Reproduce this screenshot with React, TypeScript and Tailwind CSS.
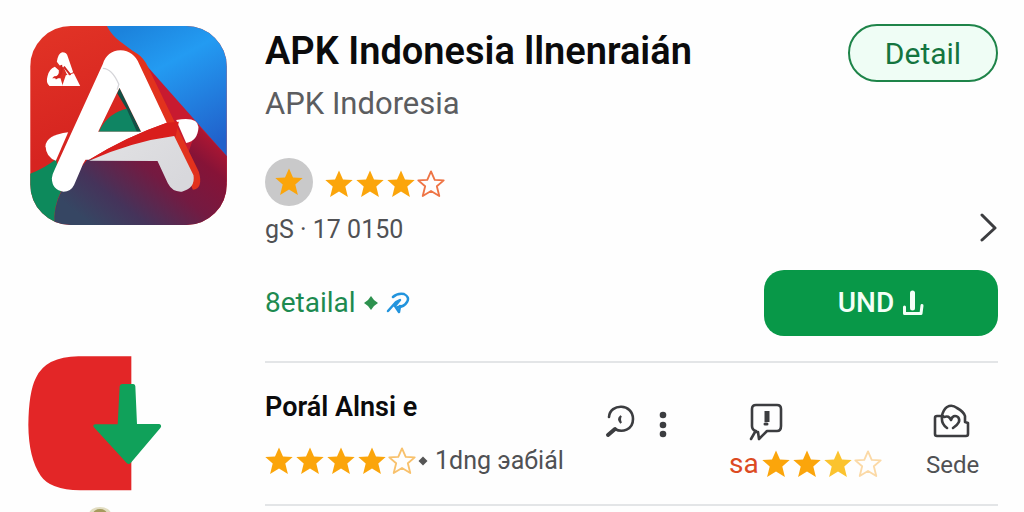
import type { ReactNode } from "react";

const STAR = "M14 0.500l4 9 9.700.6-7.400 6.400 2.600 10.500-8.900-5.500-8.900 5.500 2.600-10.500L.3 10.100l9.700-.6z";

type StarProps = { fill?: string; stroke?: string; small?: boolean };

function Star({ fill = "#fba50b", stroke = "none", small = false }: StarProps) {
  return (
    <svg viewBox="0 0 28 28" className={small ? "h-[26px] w-[26px] shrink-0 overflow-visible" : "h-7 w-7 shrink-0"} aria-hidden="true">
      <path d={STAR} fill={fill} stroke={stroke} strokeWidth="2" strokeLinejoin="round" />
    </svg>
  );
}

function AppLogo() {
  return (
    <svg viewBox="32 33 590 597" className="h-[199px] w-[197px]" role="img" aria-label="APK Indonesia">
      <defs>
        <clipPath id="tile">
          <rect x="32" y="33" width="590" height="597" rx="122" />
        </clipPath>
        <linearGradient id="sky" x1="0.2" y1="0" x2="0.7" y2="1">
          <stop offset="0" stopColor="#1c83dc" />
          <stop offset="0.35" stopColor="#239bf2" />
          <stop offset="1" stopColor="#2161cb" />
        </linearGradient>
        <linearGradient id="red" x1="0" y1="0" x2="0.4" y2="1">
          <stop offset="0" stopColor="#e23426" />
          <stop offset="0.6" stopColor="#d62420" />
          <stop offset="1" stopColor="#d91f20" />
        </linearGradient>
        <linearGradient id="dusk" x1="0" y1="0.7" x2="0.95" y2="0">
          <stop offset="0" stopColor="#364663" />
          <stop offset="0.22" stopColor="#45335a" />
          <stop offset="0.5" stopColor="#741a41" />
          <stop offset="0.75" stopColor="#861337" />
          <stop offset="1" stopColor="#c21830" />
        </linearGradient>
        <linearGradient id="leg" x1="0" y1="0" x2="1" y2="0.6">
          <stop offset="0" stopColor="#e2e2e4" />
          <stop offset="1" stopColor="#d8d8dc" />
        </linearGradient>
      </defs>
      <g clipPath="url(#tile)">
        <rect x="32" y="33" width="590" height="597" fill="url(#red)" />
        <path d="M262 33H622V430L510 310L400 180L345 112L300 78Q278 62 262 33z" fill="url(#sky)" />
        <path d="M375 145L622 424V500H500z" fill="#c81a30" />
        <path d="M105 630Q100 580 125 530L205 432H500L535 330L622 424V630z" fill="url(#dusk)" />
        <path d="M32 476Q75 460 110 432L125 528Q100 578 105 630H32z" fill="#0d8a5c" />
        <path d="M238 350Q265 292 328 280L364 350z" fill="#0f8563" />
        <path d="M300 218L364 350H352L322 283L293 235z" fill="#144f45" />
        <path d="M310 102Q362 105 385 155L538 470Q552 520 520 524L460 370L350 150z" fill="#e2321d" />
        <path d="M146 352Q80 360 78 394Q80 428 109 437z" fill="#fff" />
        <path d="M470 315Q535 304 537 336Q535 378 500 384z" fill="#fff" />
        <path d="M250 147Q262 108 303 106Q343 108 359 147L442 323Q320 365 209 434H198Q190 445 184 463L164 509Q154 530 132 530Q98 526 97 490Q99 476 106 463zM300 218L236 350H365z" fill="#fff" fillRule="evenodd" />
        <path d="M209 434Q320 365 442 323L478 320L468 366Q340 378 209 436z" fill="#d91e1c" />
        <path d="M209 437Q340 379 464 363L522 481Q528 520 487 530Q459 532 445 505L414 438z" fill="url(#leg)" />
        <path d="M250 160Q278 161 298 208L293 224" fill="none" stroke="#d5d5d9" strokeWidth="4" />
        <path d="M128 112Q142 112 145 125L161 172L143 180L133 158L120 151L112 140Q116 115 128 112z" fill="#fff" />
        <path d="M106 155L118 166Q120 184 104 184L98 190H123L130 213H90Q78 203 84 184Q88 162 106 155z" fill="#fff" />
        <path d="M139 181L163 175L182 213H128z" fill="#fff" />
        <path d="M125 150Q132 180 108 191M133 155L153 180" fill="none" stroke="#cf2420" strokeWidth="6" />
      </g>
    </svg>
  );
}

function PortalLogo() {
  return (
    <svg viewBox="84 33 402 405" className="h-[135px] w-[134px]" role="img" aria-label="Porál Alnsie">
      <path d="M394 34V436H240Q150 434 122 392Q86 340 85 240Q86 140 108 98Q138 35 235 34z" fill="#e32627" />
      <path d="M366 117H400Q406 118 406 124L411 237H478Q487 240 481 249L392 354Q386 360 380 354L281 246Q277 239 286 238H353L359 124Q360 118 366 117z" fill="#10a15a" />
    </svg>
  );
}

function IconButton({ label, children }: { label: string; children: ReactNode }) {
  return (
    <button type="button" aria-label={label} className="block text-[#3c3d40]">
      {children}
    </button>
  );
}

export default function App() {
  return (
    <main className="h-screen overflow-hidden bg-[#fefefe] pl-7 pr-[26px] pt-6 font-['Roboto',sans-serif] text-[#505154]">
      <article className="flex min-h-[332px]">
        <div className="w-[237px] shrink-0 pl-0.5 pt-0.5">
          <AppLogo />
        </div>
        <div className="min-w-0 flex-1">
          <header className="flex items-start justify-between">
            <div>
              <h1 className="whitespace-nowrap pt-1 text-[38px] leading-[46px] font-semibold text-[#0b0b0c]">APK Indonesia llnenraián</h1>
              <p className="pt-3 text-[31px] leading-9 text-[#5c5d60]">APK Indoresia</p>
            </div>
            <button type="button" className="h-[58px] w-[150px] rounded-full border-2 border-[#1e8449] bg-[#effdf5] text-[30px] text-[#14753f]">
              Detail
            </button>
          </header>

          <div className="mt-9 flex items-end justify-between">
            <div>
              <div className="flex items-center">
                <span className="mr-3 grid h-12 w-12 place-items-center rounded-full bg-[#c9c9ca]">
                  <Star />
                </span>
                <div className="flex items-center gap-[3px] pt-1" role="img" aria-label="3 / 4">
                  <Star />
                  <Star />
                  <Star />
                  <Star fill="none" stroke="#ee7445" small />
                </div>
              </div>
              <p className="pt-2 text-[25px] leading-8">gS · 17 0150</p>
            </div>
            <IconButton label="Next">
              <svg viewBox="0 0 18 34" className="h-[34px] w-[18px]" fill="none" stroke="currentColor" strokeWidth="3" strokeLinecap="round" strokeLinejoin="round">
                <path d="M2 3l13 13L2 28" />
              </svg>
            </IconButton>
          </div>

          <div className="mt-6 flex items-center justify-between">
            <a href="#detail" className="flex items-center text-[28px] leading-9 text-[#1d8a50]">
              8etailal
              <svg viewBox="0 0 14 14" className="ml-2 h-3.5 w-3.5" fill="#2d914e">
                <path d="M7 0l3 4L14 7l-4 3L7 14l-3-4L0 7l4-3z" />
              </svg>
              <svg viewBox="0 0 24 22" className="ml-2 h-[22px] w-6" fill="none" stroke="#2294dd" strokeWidth="2.500" strokeLinecap="round" strokeLinejoin="round">
                <path d="M7 5Q11 1 18 2Q24 5 21 10Q18 15 12 15" />
                <path d="M2 19L10 10L14 8L9 14L13 20L14 14" />
              </svg>
            </a>
            <button type="button" className="flex h-[66px] w-[234px] items-center justify-center gap-2 rounded-[20px] bg-[#089848] text-[28px] font-medium text-[#f3fff7]">
              UND
              <svg viewBox="0 0 22 26" className="h-[26px] w-[22px]" fill="none" stroke="currentColor" strokeWidth="3" strokeLinecap="round" strokeLinejoin="round">
                <path d="M10.500 3v15" strokeWidth="5" />
                <path d="M2.500 17v6.500h16.500l1-8" />
              </svg>
            </button>
          </div>
        </div>
      </article>

      <article className="flex">
        <div className="w-[237px] shrink-0">
          <PortalLogo />
        </div>
        <div className="mt-[5px] flex h-[145px] min-w-0 flex-1 items-start border-y-2 border-[#e3e5e7] pt-7">
          <div className="w-[336px] shrink-0">
            <h2 className="text-[27px] leading-8 font-semibold text-[#0b0b0c]">Porál Alnsi e</h2>
            <div className="flex items-center gap-[3px] pt-[22px]">
              <Star />
              <Star />
              <Star />
              <Star />
              <Star fill="none" stroke="#f8c16c" small />
              <svg viewBox="0 0 10 10" className="h-2.5 w-2.5" fill="#555">
                <path d="M5 0.500l4.500 4.500-4.500 4.500-4.500-4.500z" />
              </svg>
              <span className="whitespace-nowrap pl-1 text-[25px] leading-8">1dng эaбiál</span>
            </div>
          </div>
          <div className="flex gap-6 pl-1 pt-3.5">
            <IconButton label="Search">
              <svg viewBox="0 0 30 34" className="h-[34px] w-[30px]" fill="none" stroke="currentColor" strokeWidth="2.600" strokeLinecap="round">
                <path d="M4 12C5 -2 28 -2 28 14C28 25 17 28 10 24" />
                <path d="M3 30L10 24" strokeWidth="4" />
                <path d="M16 11Q12 14 16 18Q14 14 16 11z" strokeWidth="2" />
              </svg>
            </IconButton>
            <IconButton label="More">
              <svg viewBox="0 0 8 34" className="h-[34px] w-2" fill="currentColor">
                <circle cx="4" cy="10" r="3.300" />
                <circle cx="4" cy="20" r="3.300" />
                <circle cx="4" cy="29" r="3.300" />
              </svg>
            </IconButton>
          </div>
          <div className="ml-auto pt-3">
            <div className="pl-5">
              <IconButton label="Comment">
                <svg viewBox="0 0 34 38" className="h-[38px] w-[34px]" fill="none" stroke="currentColor" strokeWidth="2.600" strokeLinejoin="round" strokeLinecap="round">
                  <path d="M7 28Q3 27 3 23V6Q3 2 7 2H28Q32 2 32 6V23Q32 28 28 28H18L10 36L9 29L6 29L2 36" />
                  <path d="M18 8V19" strokeWidth="5" strokeLinecap="butt" />
                  <path d="M16 21h2" strokeWidth="3" />
                </svg>
              </IconButton>
            </div>
            <div className="flex items-center gap-[3px] pt-[7px]">
              <span className="w-[30px] text-[28px] leading-8 text-[#dc4a22]">sa</span>
              <Star />
              <Star />
              <Star fill="#fbc32f" />
              <Star fill="none" stroke="#fbd9a6" small />
            </div>
          </div>
          <div className="ml-[45px] mr-5 w-[52px] pt-3">
            <button type="button" className="flex flex-col items-center text-2xl leading-8 text-[#505154]">
              <svg viewBox="0 0 38 36" className="mr-1 h-9 w-[38px]" fill="none" stroke="#3c3d40" strokeWidth="2.600" strokeLinejoin="round" strokeLinecap="round">
                <path d="M11 13H5Q3 13 3 15V31Q3 33 5 33H34Q36 33 36 31V20L33 19V13Q32 9 25 5Q20 1 15 4Q11 7 10 13Q9 21 15 25" />
                <path d="M12 14Q17 12 19 17Q21 11 26 14Q30 19 21 25" />
              </svg>
              <span className="pt-2.5">Sede</span>
            </button>
          </div>
        </div>
      </article>

      <svg viewBox="0 0 24 8" className="ml-[60px] h-2 w-6" aria-hidden="true">
        <ellipse cx="12" cy="8" rx="11" ry="7" fill="#b9ad68" opacity="0.4" />
        <ellipse cx="12" cy="8" rx="7" ry="5" fill="#968a42" opacity="0.8" />
      </svg>
    </main>
  );
}
